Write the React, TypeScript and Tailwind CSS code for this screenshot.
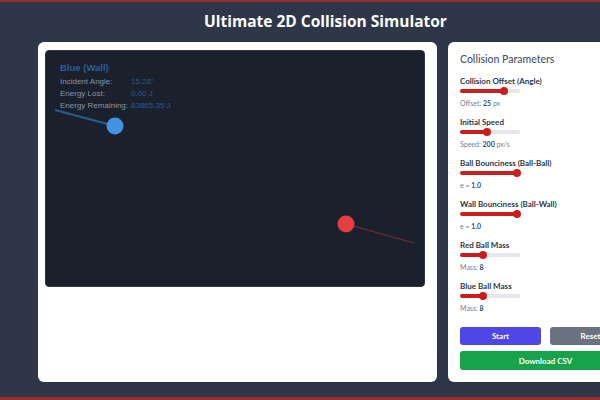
import React from "react";

type Param = {
  label: string;
  pct: number;
  prefix: string;
  value: string;
  unit?: string;
};

const params: Param[] = [
  { label: "Collision Offset (Angle)", pct: 73, prefix: "Offset:", value: "25", unit: "px" },
  { label: "Initial Speed", pct: 45, prefix: "Speed:", value: "200", unit: "px/s" },
  { label: "Ball Bounciness (Ball-Ball)", pct: 100, prefix: "e =", value: "1.0" },
  { label: "Wall Bounciness (Ball-Wall)", pct: 100, prefix: "e =", value: "1.0" },
  { label: "Red Ball Mass", pct: 38, prefix: "Mass:", value: "8" },
  { label: "Blue Ball Mass", pct: 38, prefix: "Mass:", value: "8" },
];

const Slider = ({ pct }: { pct: number }) => (
  <div className="relative h-[8px] w-[60px] flex items-center">
    <div className="h-[4px] w-full rounded-full bg-[#e5e7eb] overflow-hidden">
      <div className="h-full bg-[#c81e1e]" style={{ width: `${pct}%` }} />
    </div>
    <div
      className="absolute top-0 h-[8px] w-[8px] -ml-[4px] rounded-full bg-[#c81e1e]"
      style={{ left: `${Math.min(pct, 95)}%` }}
    />
  </div>
);

const Stat = ({ label, value }: { label: string; value: string }) => (
  <div className="flex leading-[12px] whitespace-nowrap">
    <span className="w-[71px] text-[#8b95a5]">{label}</span>
    <span className="text-[#2f5a8f]">{value}</span>
  </div>
);

export default function App() {
  return (
    <div className="h-[400px] w-full overflow-hidden bg-[#2d3748] border-t-2 border-b-[3px] border-[#9b2c2c] font-['Lato',sans-serif]">
      <div className="w-[651px]">
        <h1 className="h-[40px] flex items-center justify-center font-['Open_Sans',sans-serif] text-[15.5px] font-bold text-white">
          Ultimate 2D Collision Simulator
        </h1>

        <div className="flex gap-[11px] pl-[38px]">
          {/* simulation */}
          <div className="w-[399px] h-[340px] rounded-md bg-white pt-[8px] pl-[7px]">
            <div className="relative w-[380px] h-[237px] rounded-[4px] bg-[#1a202c] border border-[#2d3748] overflow-hidden">
              <div className="absolute left-[14px] top-[10px] font-['Liberation_Sans',Arial,sans-serif] text-[8px]">
                <div className="text-[9.5px] font-bold text-[#2b5f9e] leading-[14px] mb-[1px]">
                  Blue (Wall)
                </div>
                <Stat label="Incident Angle:" value="15.28°" />
                <Stat label="Energy Lost:" value="0.00 J" />
                <Stat label="Energy Remaining:" value="83865.35 J" />
              </div>
              <svg className="absolute inset-0" width="380" height="237" viewBox="0 0 380 237">
                <line x1="9" y1="59" x2="69" y2="75" stroke="#2b6cb0" strokeWidth="2" opacity="0.8" />
                <circle cx="69" cy="75" r="8.5" fill="#4193e4" />
                <line x1="300" y1="173" x2="368" y2="192" stroke="#7f2a31" strokeWidth="1.2" />
                <circle cx="300" cy="173" r="8.5" fill="#e53e3e" />
              </svg>
            </div>
          </div>

          {/* controls */}
          <div className="w-[195px] h-[340px] rounded-md bg-white px-[12px] pt-[10px]">
            <h2 className="text-[10.5px] leading-[15px] font-medium text-[#4a5568] mb-[8px]">
              Collision Parameters
            </h2>
            <div className="flex flex-col gap-[8px]">
              {params.map((p) => (
                <div key={p.label}>
                  <div className="text-[8px] leading-[12px] font-bold text-[#2d3748]">
                    {p.label}
                  </div>
                  <Slider pct={p.pct} />
                  <div className="mt-[3px] text-[7px] leading-[10px] text-[#718096]">
                    {p.prefix} <span className="font-bold text-[#2c5282]">{p.value}</span>
                    {p.unit ? ` ${p.unit}` : ""}
                  </div>
                </div>
              ))}
            </div>
            <div className="mt-[14px] grid grid-cols-2 gap-[9px]">
              <button className="h-[18px] rounded-[3px] bg-[#5046e5] text-[8px] font-bold text-white">
                Start
              </button>
              <button className="h-[18px] rounded-[3px] bg-[#6b7280] text-[8px] font-bold text-white">
                Reset
              </button>
            </div>
            <button className="mt-[6px] h-[19px] w-full rounded-[3px] bg-[#16a34a] text-[8px] font-bold text-white">
              Download CSV
            </button>
          </div>
        </div>
      </div>
    </div>
  );
}
